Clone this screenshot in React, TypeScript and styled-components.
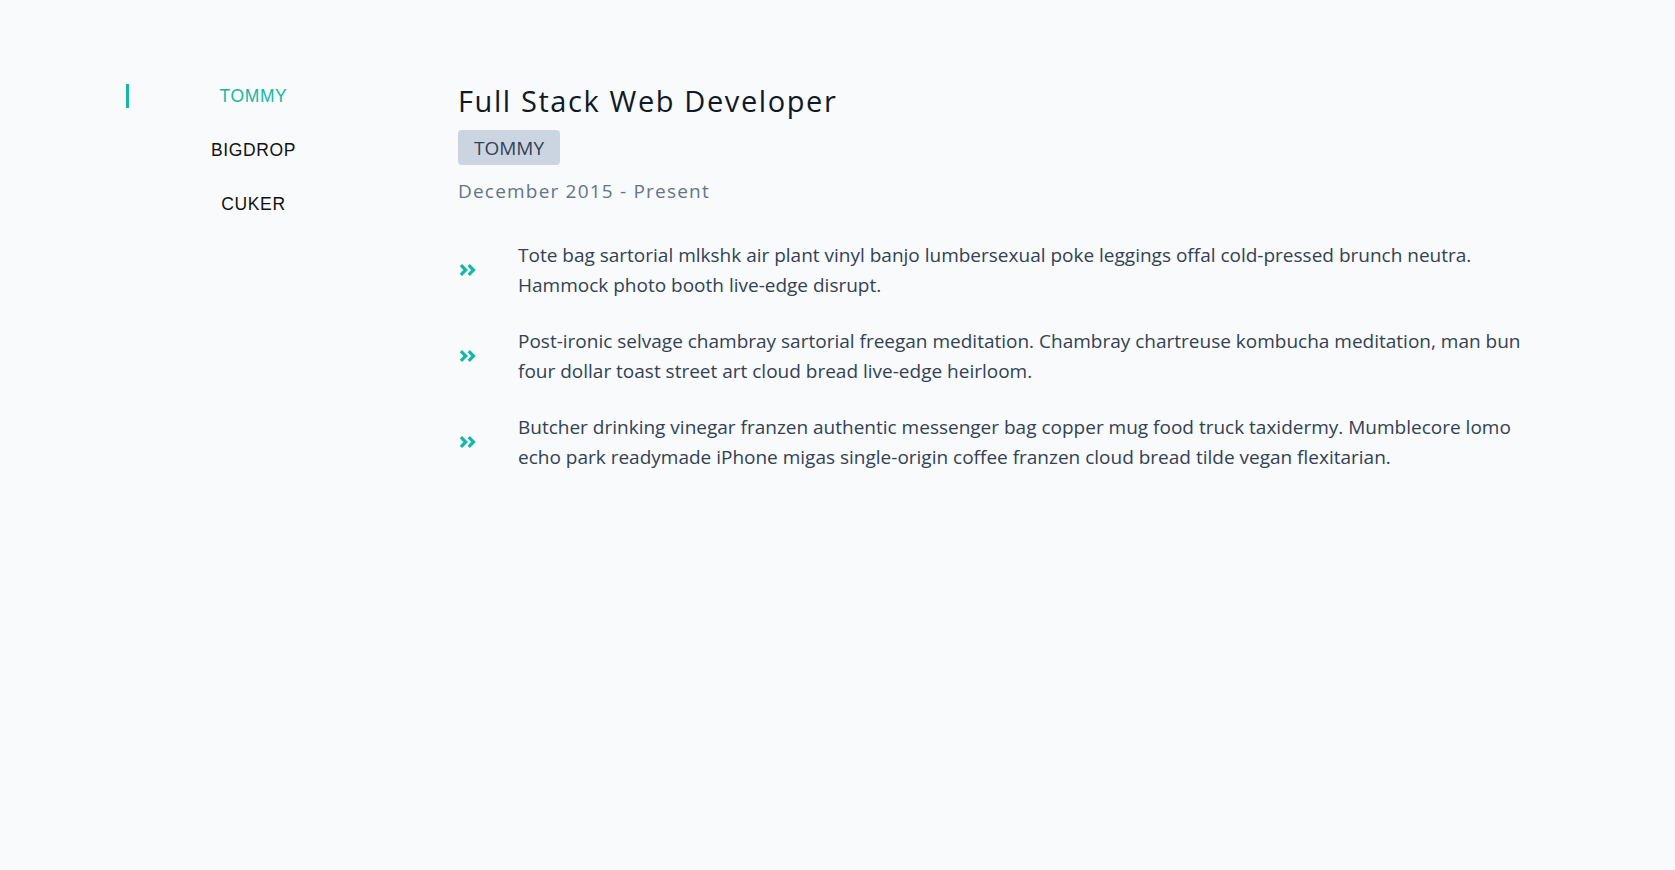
import React, { useState } from "react";
import styled, { createGlobalStyle } from "styled-components";

const GlobalStyle = createGlobalStyle`
  html, body {
    margin: 0;
    padding: 0;
    background: #f8fafc;
  }
  body {
    font-family: "Open Sans", "Noto Sans", sans-serif;
    -webkit-font-smoothing: antialiased;
  }
`;

const Page = styled.div`
  min-height: 870px;
  background: #f8fafc;
  box-sizing: border-box;
  padding: 84px 140px 0 126px;
`;

const Layout = styled.div`
  display: flex;
  align-items: flex-start;
  gap: 80px;
`;

const Nav = styled.nav`
  width: 252px;
  flex-shrink: 0;
  display: flex;
  flex-direction: column;
  gap: 30px;
`;

const NavItem = styled.button<{ $active: boolean }>`
  display: flex;
  align-items: center;
  justify-content: center;
  height: 24px;
  padding: 0;
  background: transparent;
  border: none;
  border-left: 3px solid ${(p) => (p.$active ? "#14b8a6" : "transparent")};
  font-family: "Liberation Sans", Arial, sans-serif;
  font-size: 17.5px;
  letter-spacing: 0.6px;
  color: ${(p) => (p.$active ? "#14b8a6" : "#111111")};
  cursor: pointer;
  text-transform: uppercase;
`;

const Content = styled.section`
  flex: 1;
  min-width: 0;
`;

const Title = styled.h1`
  margin: 0;
  font-family: "Open Sans", sans-serif;
  font-weight: 400;
  font-size: 29px;
  line-height: 34px;
  letter-spacing: 1.6px;
  color: #111827;
`;

const Badge = styled.span`
  display: inline-flex;
  align-items: center;
  justify-content: center;
  margin-top: 12px;
  height: 35px;
  width: 102px;
  box-sizing: border-box;
  border-radius: 4px;
  background: #cbd5e1;
  color: #334155;
  font-size: 19px;
`;

const DateLine = styled.div`
  margin-top: 14px;
  font-size: 19px;
  line-height: 24px;
  letter-spacing: 1.2px;
  color: #64748b;
`;

const List = styled.ul`
  list-style: none;
  margin: 37px 0 0 0;
  padding: 0;
  display: flex;
  flex-direction: column;
  gap: 26px;
`;

const Item = styled.li`
  display: flex;
  align-items: center;
`;

const IconBox = styled.span`
  width: 60px;
  flex-shrink: 0;
  display: flex;
  align-items: center;
  color: #14b8a6;
  padding-left: 1px;
  box-sizing: border-box;
`;

const Text = styled.p`
  margin: 0;
  font-size: 19px;
  line-height: 30px;
  color: #334155;
`;

const Chevrons = () => (
  <svg width="18" height="12" viewBox="0 0 18 12" fill="none">
    <polyline
      points="1.9,1.2 6.7,6 1.9,10.8"
      stroke="currentColor"
      strokeWidth="3.2"
      strokeLinejoin="miter"
    />
    <polyline
      points="9.7,1.2 14.5,6 9.7,10.8"
      stroke="currentColor"
      strokeWidth="3.2"
      strokeLinejoin="miter"
    />
  </svg>
);

const jobs = [
  {
    company: "TOMMY",
    title: "Full Stack Web Developer",
    dates: "December 2015 - Present",
    duties: [
      "Tote bag sartorial mlkshk air plant vinyl banjo lumbersexual poke leggings offal cold-pressed brunch neutra. Hammock photo booth live-edge disrupt.",
      "Post-ironic selvage chambray sartorial freegan meditation. Chambray chartreuse kombucha meditation, man bun four dollar toast street art cloud bread live-edge heirloom.",
      "Butcher drinking vinegar franzen authentic messenger bag copper mug food truck taxidermy. Mumblecore lomo echo park readymade iPhone migas single-origin coffee franzen cloud bread tilde vegan flexitarian.",
    ],
  },
  {
    company: "BIGDROP",
    title: "Front-End Engineer",
    dates: "May 2015 - December 2015",
    duties: [
      "Hashtag drinking vinegar scenester mumblecore snackwave four dollar toast, lumbersexual XOXO. Cardigan church-key pabst, biodiesel vexillologist viral squid.",
    ],
  },
  {
    company: "CUKER",
    title: "Engineering Intern",
    dates: "May 2014 - September 2015",
    duties: [
      "I'm baby woke mlkshk wolf bitters live-edge blue bottle, hammock freegan copper mug whatever cold-pressed.",
    ],
  },
];

export default function App() {
  const [active, setActive] = useState(0);
  const job = jobs[active];
  return (
    <>
      <GlobalStyle />
      <Page>
        <Layout>
          <Nav>
            {jobs.map((j, i) => (
              <NavItem key={j.company} $active={i === active} onClick={() => setActive(i)}>
                {j.company}
              </NavItem>
            ))}
          </Nav>
          <Content>
            <Title>{job.title}</Title>
            <Badge>{job.company}</Badge>
            <DateLine>{job.dates}</DateLine>
            <List>
              {job.duties.map((d, i) => (
                <Item key={i}>
                  <IconBox>
                    <Chevrons />
                  </IconBox>
                  <Text>{d}</Text>
                </Item>
              ))}
            </List>
          </Content>
        </Layout>
      </Page>
    </>
  );
}
